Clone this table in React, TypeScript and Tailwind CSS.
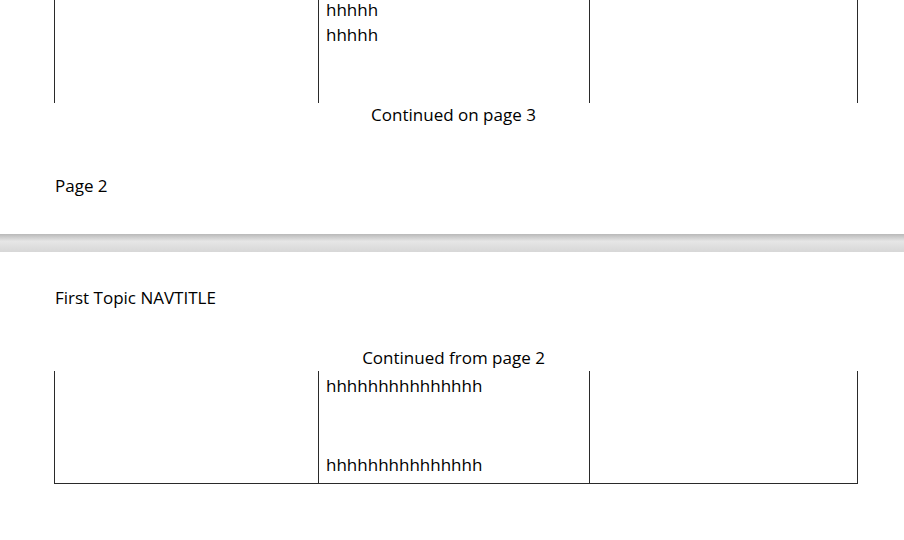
import React from 'react';

const cellTop = 'border-l border-[#2a2a2a]';

export default function App() {
  return (
    <div className="w-[904px] h-[540px] overflow-hidden bg-white font-['Open_Sans',sans-serif] text-[17px] leading-[25px] text-black">
      {/* Page 2 (tail) */}
      <div className="h-[234px] bg-white">
        <div className="ml-[54px] grid grid-cols-[264px_271px_269px] h-[103px]">
          <div className={cellTop} />
          <div className={`${cellTop} pl-[7px]`}>
            <p className="leading-[19px]">hhhhh</p>
            <p className="mt-[3px]">hhhhh</p>
          </div>
          <div className={`${cellTop} border-r`} />
        </div>
        <div className="-mt-[1px] ml-[54px] grid grid-cols-[264px_271px_269px]">
          <div />
          <p className="text-center">Continued on page 3</p>
          <div />
        </div>
        <p className="mt-[46px] pl-[55px]">Page 2</p>
      </div>

      {/* page gap */}
      <div className="h-[18px] bg-linear-to-b from-[#b9b9b9] via-[#e6e6e6] via-40% to-[#d7d7d7]" />

      {/* Page 3 */}
      <div className="bg-white pt-[33px]">
        <p className="pl-[55px]">First Topic NAVTITLE</p>
        <div className="mt-[35px] ml-[54px] grid grid-cols-[264px_271px_269px]">
          <div />
          <p className="text-center">Continued from page 2</p>
          <div />
        </div>
        <div className="mt-[1px] ml-[54px] grid grid-cols-[264px_271px_269px] h-[113px]">
          <div className={`${cellTop} border-b`} />
          <div className={`${cellTop} border-b pl-[7px] pt-[2px] flex flex-col justify-between pb-[6px]`}>
            <p>hhhhhhhhhhhhhhh</p>
            <p>hhhhhhhhhhhhhhh</p>
          </div>
          <div className={`${cellTop} border-r border-b`} />
        </div>
      </div>
    </div>
  );
}
